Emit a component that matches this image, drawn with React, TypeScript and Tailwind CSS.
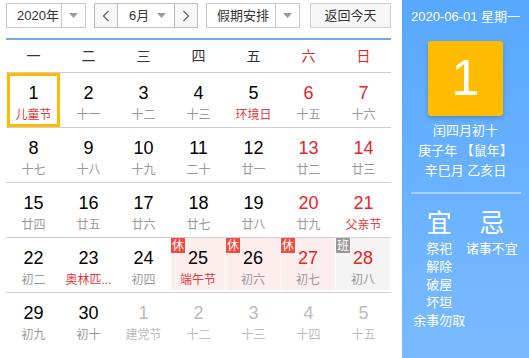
import clsx from "clsx";

type Day = {
  n: number;
  lunar: string;
  fest?: boolean;
  other?: boolean;
  today?: boolean;
  mark?: "休" | "班";
};

const weekdays = ["一", "二", "三", "四", "五", "六", "日"];

const weeks: Day[][] = [
  [
    { n: 1, lunar: "儿童节", fest: true, today: true },
    { n: 2, lunar: "十一" },
    { n: 3, lunar: "十二" },
    { n: 4, lunar: "十三" },
    { n: 5, lunar: "环境日", fest: true },
    { n: 6, lunar: "十五" },
    { n: 7, lunar: "十六" },
  ],
  [
    { n: 8, lunar: "十七" },
    { n: 9, lunar: "十八" },
    { n: 10, lunar: "十九" },
    { n: 11, lunar: "二十" },
    { n: 12, lunar: "廿一" },
    { n: 13, lunar: "廿二" },
    { n: 14, lunar: "廿三" },
  ],
  [
    { n: 15, lunar: "廿四" },
    { n: 16, lunar: "廿五" },
    { n: 17, lunar: "廿六" },
    { n: 18, lunar: "廿七" },
    { n: 19, lunar: "廿八" },
    { n: 20, lunar: "廿九" },
    { n: 21, lunar: "父亲节", fest: true },
  ],
  [
    { n: 22, lunar: "初二" },
    { n: 23, lunar: "奥林匹...", fest: true },
    { n: 24, lunar: "初四" },
    { n: 25, lunar: "端午节", fest: true, mark: "休" },
    { n: 26, lunar: "初六", mark: "休" },
    { n: 27, lunar: "初七", mark: "休" },
    { n: 28, lunar: "初八", mark: "班" },
  ],
  [
    { n: 29, lunar: "初九" },
    { n: 30, lunar: "初十" },
    { n: 1, lunar: "建党节", other: true },
    { n: 2, lunar: "十二", other: true },
    { n: 3, lunar: "十三", other: true },
    { n: 4, lunar: "十四", other: true },
    { n: 5, lunar: "十五", other: true },
  ],
];

const font = "font-['Liberation_Sans','Noto_Sans_CJK_SC',sans-serif]";

function Caret() {
  return (
    <svg width="9" height="5" viewBox="0 0 9 5">
      <path d="M0 0h9L4.5 5z" fill="#999" />
    </svg>
  );
}

function Chevron({ left }: { left?: boolean }) {
  return (
    <svg width="8" height="12" viewBox="0 0 8 12">
      <path
        d={left ? "M6.5 1L1.5 6l5 5" : "M1.5 1l5 5-5 5"}
        fill="none"
        stroke="#666"
        strokeWidth="1.3"
      />
    </svg>
  );
}

function Select({ label, width }: { label: string; width: string }) {
  return (
    <div className={clsx("flex h-[25px] border border-[#c9c9c9] bg-white", width)}>
      <div className="flex flex-1 items-center pl-[10px] text-[13px] text-[#333]">{label}</div>
      <div className="flex w-[24px] items-center justify-center border-l border-[#c9c9c9]">
        <Caret />
      </div>
    </div>
  );
}

function Cell({ d, col }: { d: Day; col: number }) {
  const weekend = col >= 5;
  const numColor = d.other ? "text-[#bbb]" : weekend ? "text-[#e8232a]" : "text-black";
  const lunarColor = d.other ? "text-[#bbb]" : d.fest ? "text-[#e8383d]" : "text-[#999]";
  return (
    <div className="relative h-[54px]">
      <div
        className={clsx(
          "absolute inset-0 flex flex-col items-center",
          d.mark === "休" && "mr-px mb-[2px] bg-[#fdeeee]",
          d.mark === "班" && "mr-px mb-[2px] bg-[#f4f4f4]",
          d.today && "mx-px border-[3px] border-[#ffbb00]"
        )}
      >
        <div
          className={clsx(
            "text-[18px] leading-[20px]",
            d.today ? "mt-[7px]" : "mt-[10px]",
            numColor
          )}
        >
          {d.n}
        </div>
        <div
          className={clsx(
            "mt-[4px] whitespace-nowrap text-center text-[12px] leading-[16px]",
            lunarColor
          )}
        >
          {d.lunar}
        </div>
      </div>
      {d.mark && (
        <div
          className={clsx(
            "absolute left-0 top-0 flex h-[15px] w-[14px] items-center justify-center text-[12px] leading-none text-white",
            d.mark === "休" ? "bg-[#f54b3f]" : "bg-[#999]"
          )}
        >
          {d.mark}
        </div>
      )}
    </div>
  );
}

export default function App() {
  return (
    <div className={clsx("flex h-[358px] w-[529px] overflow-hidden bg-white", font)}>
      <div className="w-[402px] pl-[6px] pr-[11px]">
        <div className="mt-[3px] flex items-center">
          <Select label="2020年" width="w-[80px]" />
          <div className="ml-[8px] flex h-[25px] w-[104px] border border-[#bdbdbd]">
            <div className="flex w-[22px] items-center justify-center bg-[#f7f7f7]">
              <Chevron left />
            </div>
            <div className="flex flex-1 items-center justify-between border-x border-[#bdbdbd] bg-white pl-[11px] pr-[8px] text-[13px] text-[#333]">
              <span>6月</span>
              <Caret />
            </div>
            <div className="flex w-[22px] items-center justify-center bg-[#f7f7f7]">
              <Chevron />
            </div>
          </div>
          <div className="ml-[8px]">
            <Select label="假期安排" width="w-[94px]" />
          </div>
          <div className="ml-[10px] flex h-[25px] w-[81px] items-center justify-center border border-[#d0d0d0] bg-[#f7f7f7] text-[13px] text-[#333]">
            返回今天
          </div>
        </div>

        <div className="mt-[10px] h-[2px] bg-[#74a9ec]" />
        <div className="grid h-[33px] grid-cols-7 border-b border-[#cfcfcf]">
          {weekdays.map((w, i) => (
            <div
              key={w}
              className={clsx(
                "flex items-center justify-center text-[14px]",
                i >= 5 ? "text-[#e8232a]" : "text-[#333]"
              )}
            >
              {w}
            </div>
          ))}
        </div>

        {weeks.map((week, r) => (
          <div
            key={r}
            className={clsx("grid grid-cols-7", r < 4 && "border-b border-[#cfcfcf]")}
          >
            {week.map((d, c) => (
              <Cell key={c} d={d} col={c} />
            ))}
          </div>
        ))}
      </div>

      <div className="flex w-[127px] flex-col items-center bg-gradient-to-b from-[#57a8ff] to-[#79baff] text-white">
        <div className="mt-[8px] text-[13px] leading-[18px]">2020-06-01 星期一</div>
        <div className="mt-[15px] flex h-[75px] w-[75px] items-center justify-center rounded-[3px] bg-[#ffbb00] text-[50px] shadow-[0_2px_4px_rgba(0,0,0,0.2)]">
          1
        </div>
        <div className="mt-[5px] text-center text-[13px] leading-[20px]">
          <div>闰四月初十</div>
          <div>庚子年 【鼠年】</div>
          <div>辛巳月 乙亥日</div>
        </div>
        <div className="mt-[11px] h-[2px] w-[110px] bg-[#a5d0ff]" />
        <div className="mt-[14px] grid w-full grid-cols-2 px-[11px] text-center">
          <div className="flex flex-col items-center">
            <div className="text-[25px] leading-[30px]">宜</div>
            <div className="mt-[2px] text-[13px] leading-[18px]">
              <div>祭祀</div>
              <div>解除</div>
              <div>破屋</div>
              <div>坏垣</div>
              <div className="whitespace-nowrap">余事勿取</div>
            </div>
          </div>
          <div className="flex flex-col items-center">
            <div className="text-[25px] leading-[30px]">忌</div>
            <div className="mt-[2px] whitespace-nowrap text-[13px] leading-[18px]">诸事不宜</div>
          </div>
        </div>
      </div>
    </div>
  );
}
